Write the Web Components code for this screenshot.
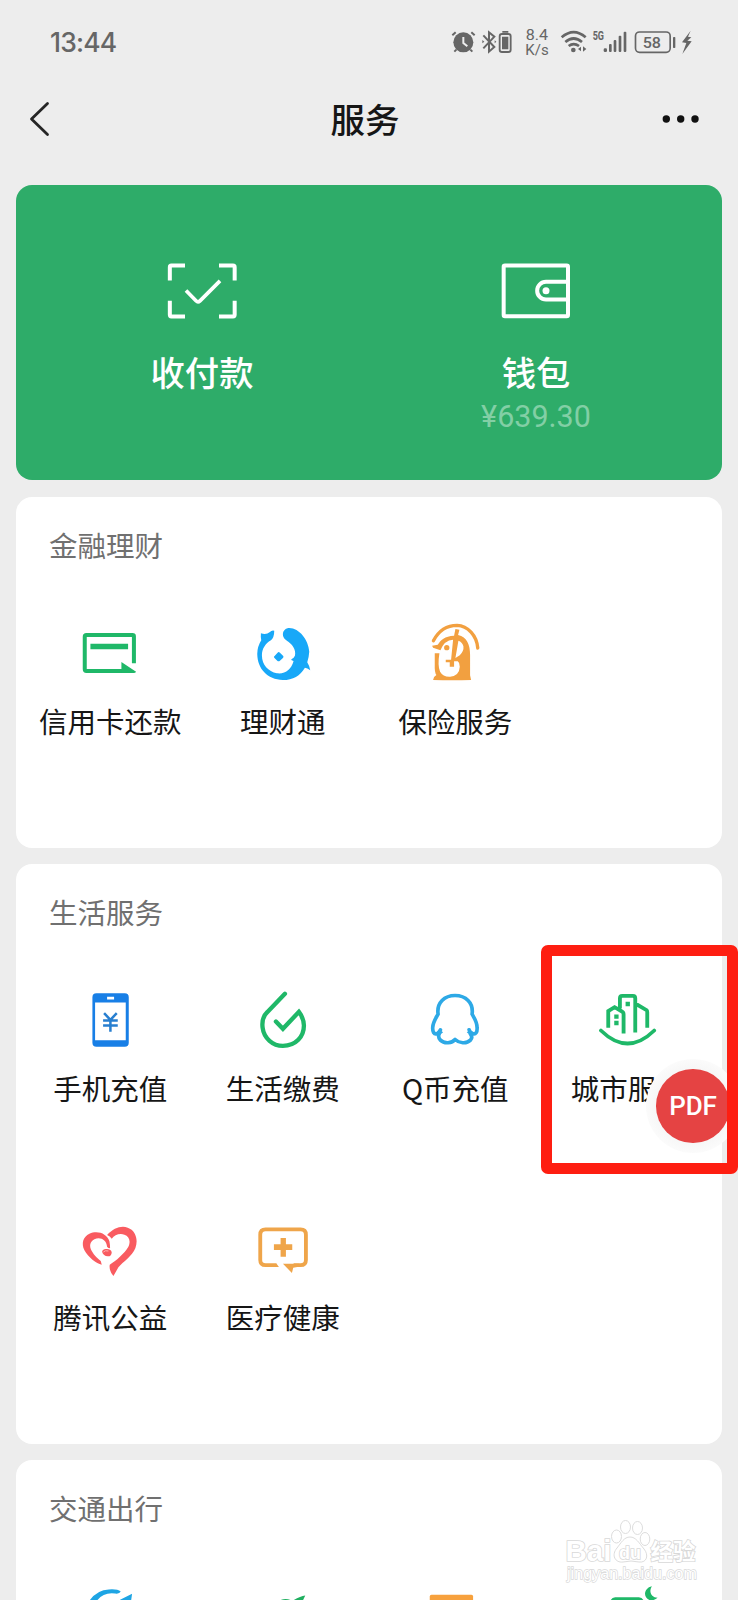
<!DOCTYPE html>
<html lang="zh-CN">
<head>
<meta charset="utf-8">
<title>服务</title>
<style>
html,body{margin:0;padding:0}
body{width:738px;height:1600px;overflow:hidden;background:#ededed;font-family:"Noto Sans CJK SC",sans-serif;color:#161616}
</style>
</head>
<body>
<service-app></service-app>
<script>
const define = (name, markup, setup) => {
  const t = document.createElement('template');
  t.innerHTML = markup;
  customElements.define(name, class extends HTMLElement {
    constructor() {
      super();
      this.attachShadow({ mode: 'open' }).appendChild(t.content.cloneNode(true));
    }
    connectedCallback() { if (setup) setup(this, this.shadowRoot); }
  });
};

const GREEN = '#1fb868', ORANGE = '#f2a040';
const ICONS = {
  scan: ['111 70.5 210 168', `<g fill="none" stroke="#fff" stroke-width="12"><path d="M165 78H124Q119.500 78 119.500 83V123M267 78H309Q314 78 314 83V123M119.500 184V226Q119.500 231 124 231H165M314 184V226Q314 231 309 231H267"/><path d="M168 153L198 184Q204 190 210 184L270 124" stroke-width="11"/></g>`],
  wallet: ['1113 70.5 210 168', `<g fill="none" stroke="#fff" stroke-width="12"><rect x="1121" y="78" width="193" height="152.500" rx="4"/><path d="M1314 127H1248A26.500 26.500 0 0 0 1248 180H1314"/></g><circle cx="1248" cy="154" r="10.500" fill="#fff"/>`],
  credit: ['171.75 60 198 198', `<path d="M342.500 190V109Q342.500 105 338 105H200Q195 105 195 110V208Q195 213 200 213H312" fill="none" stroke="${GREEN}" stroke-width="12"/><path d="M212 131H325V148H212ZM305 186L349 215Q347 219 342 219H305Z" fill="${GREEN}"/>`],
  fish: ['29.25 60 198 198', `<g fill="#18a8f8"><path d="M62 100Q78 106 89 96Q94 90 102 92Q102 112 92 121C75 131 65 147 65 166C65 195 84 215 110 220C136 223 153 208 160 183Q152 182 153 178Q160 176 164 167C169 149 154 130 140 122C120 110 127 84 147 84C177 84 205 120 207 155Q206 171 201 187Q207 196 210 211Q201 204 194 203C180 227 158 240 128 240C81 238 52 207 51 162Q51 140 63 121Q61 109 62 100Z"/><path d="M101 170L112 158Q115 154 119 158L129 168Q131 171 128 174L119 182Q115 185 111 182L102 173Z"/></g>`],
  umbrella: ['546.75 60 198 198', `<path d="M581 122C599 88 626 76 652 76C684 77 711 107 714 144" fill="none" stroke="${ORANGE}" stroke-width="10" stroke-linecap="round"/><path fill="${ORANGE}" fill-rule="evenodd" d="M647 87L659 89L655 105C682 111 691 135 691 164V226L694 240Q638 242 580 240L583 231L590 225Q584 219 585 193V160H599Q593 198 601 215Q610 231 631 230Q659 227 660 200Q661 189 654 184H643V200H630V187H618V179H634L640 119Q614 120 602 151L580 143L577 137L594 134C602 121 615 108 643 107ZM656 122L647 174L660 166Q673 153 671 139Q667 125 656 122Z"/><circle cx="621" cy="143" r="8" fill="${ORANGE}"/>`],
  phone: ['141.75 52.5 198 198', `<path fill="#187fe6" fill-rule="evenodd" d="M200 71H285Q297 71 297 83V220Q297 232 285 232H200Q188 232 188 220V83Q188 71 200 71ZM196 99V212H288V99ZM232 82V90H253V82Z"/><path d="M223 131L242 151L261 131M220 153H264M220 168H264M242 151V187" stroke="#287fd0" stroke-width="7.500" fill="none"/>`],
  drop: ['659.25 52.5 198 198', `<path d="M764 73L711 128C697 141 695 157 697 174C701 207 728 229 758 229C797 229 821 201 821 168Q820 145 806 127L758 178L737 156" fill="none" stroke="${GREEN}" stroke-width="13" stroke-linecap="round"/>`],
  penguin: ['126.75 52.5 198 198', `<path d="M182 181Q178 188 173 192C162 197 158 185 159 173C160 157 170 143 175 134C170 99 195 78 226 78C257 78 282 99 277 134C282 143 292 157 292 174C293 187 288 197 278 192Q270 188 268 181M178 194Q174 204 182 212C194 224 217 221 226 210C238 221 260 224 272 212Q280 204 272 194" fill="none" stroke="#2da9e6" stroke-width="11" stroke-linecap="round" stroke-linejoin="round"/><path d="M180 176Q184 185 190 188L176 200ZM271 176Q267 185 261 188L275 200Z" fill="#2da9e6"/>`],
  city: ['194.25 157.5 198 198', `<g fill="none" stroke="${GREEN}" stroke-width="11.500"><path d="M234 280V230L253 218L275 231Q280 233 280 240V297M269 222V191Q269 184 276 184H308Q315 184 315 191V294M315 207L349 227Q351 229 351 233V280"/><path d="M212 288Q292 366 372 288" stroke-linecap="round" stroke-width="11"/></g><path d="M286 202H299V215H286ZM252 240H265V253H252ZM252 259H265V272H252Z" fill="${GREEN}"/>`],
  heart: ['141.75 48 198 198', `<g fill="#f95b60"><path d="M232 105C252 84 274 76 294 83C318 91 326 119 317 144C307 169 280 185 266 202L251 228Q237 212 240 194C258 184 285 159 295 142C304 124 299 109 284 104C268 99 254 106 246 116Q241 108 232 105Z"/><path d="M216 194C200 192 175 171 164 151C154 130 160 110 179 101C203 90 232 100 239 124Q241 135 241 145Q235 145 232 140C230 119 211 110 194 118C180 125 178 139 186 153C193 167 206 177 213 183Z"/><path d="M217 155Q219 146 231 147Q245 147 246 158Q244 170 234 169Q221 168 217 155Z"/></g><path d="M221 156Q226 150 236 153" fill="none" stroke="#ffb4b4" stroke-width="3"/>`],
  medical: ['659.25 48 198 198', `<path d="M738 195.500H706Q690 195.500 690 180V104Q690 88 706 88H811Q827 88 827 104V180Q827 195.500 811 195.500H790" fill="none" stroke="#efa54a" stroke-width="11.500"/><path d="M738 190L746 201H734ZM758 191H806L801 201L789 203L785 219ZM751 114H767V133H786V150H767V170H751V150H731V133H751Z" fill="#efa54a"/>`],
  travel1: ['231.75 400.5 198 198', `<path d="M264 461Q289 421 327 420Q353 418 363 426Q359 434 346 432Q306 427 287 461ZM361 451L397 433L393 461H357Z" fill="#1ea5e4"/>`],
  travel2: ['749.25 400.5 198 198', `<path d="M843 451Q857 446 872 452V460H843ZM880 452Q900 440 915 438L906 457H878Z" fill="#20af60"/>`],
  travel3: ['246.75 70.5 198 198', `<path d="M270 111Q270 106 275 106H395Q400 106 400 111V230H270Z" fill="#f7a13d"/>`],
  travel4: ['764.25 70.5 198 198', `<path d="M809 130Q812 113 825 113H896Q909 113 912 130V160H809ZM935 80C910 85 906 117 932 123Q944 122 952 115C934 114 924 98 935 80Z" fill="${GREEN}"/>`]
};

define('line-icon', `<style>:host{display:block;width:66px;height:66px}svg{display:block;width:100%;height:100%}</style><svg></svg>`, (el, root) => {
  const [box, body] = ICONS[el.getAttribute('name')];
  const svg = root.querySelector('svg');
  svg.setAttribute('viewBox', box);
  svg.innerHTML = body;
});

const placeIcon = (el, root) => {
  const icon = document.createElement('line-icon');
  icon.setAttribute('name', el.getAttribute('icon'));
  root.querySelector('.icon').replaceChildren(icon);
};

define('status-bar', `<style>
:host{display:flex;justify-content:space-between;align-items:flex-start;height:84px;padding:0 40px 0 50px;box-sizing:border-box;color:#666}
time{font:500 26.500px/36px Inter,sans-serif;margin-top:24px;letter-spacing:-.8px}
svg{display:block;margin-top:26px;width:248px;height:32px}
</style>
<time>13:44</time>
<svg viewBox="60 48 744 96" fill="#666">
<circle cx="100" cy="97" r="30"/><path d="M67 76L77 67M134 76L124 67M79 119L73 125M121 119L127 125" stroke="#666" stroke-width="6" /><path d="M100 81V99L112 109" stroke="#ededed" stroke-width="6" fill="none"/>
<path d="M160 76L193 111L177 125V67L193 80L160 115" fill="none" stroke="#666" stroke-width="6"/><path d="M157 90L163 95L157 100ZM194 91L199 95L194 100Z"/>
<rect x="209" y="72" width="33" height="54" rx="7" fill="none" stroke="#666" stroke-width="5.500"/><path d="M217 63H235V68H217ZM216 80H235V118H216Z"/>
<text x="287" y="91" font-family="Roboto" font-size="45" textLength="67" lengthAdjust="spacingAndGlyphs">8.4</text>
<text x="286" y="134" font-family="Roboto" font-size="45" textLength="70" lengthAdjust="spacingAndGlyphs">K/s</text>
<g fill="none" stroke="#666" stroke-width="8"><path d="M395 82Q431 51 467 82M406 96Q431 75 456 96M416 108Q431 97 447 108"/></g><circle cx="430" cy="120" r="7"/><path d="M453 110V124L444 117ZM459 109V125L469 117Z"/>
<text x="488" y="91" font-family="Roboto" font-weight="700" font-size="36" textLength="34" lengthAdjust="spacingAndGlyphs">5G</text>
<rect x="521" y="115" width="10" height="11" rx="4"/><rect x="537" y="102" width="8" height="24" rx="3"/><rect x="551" y="90" width="8" height="36" rx="3"/><rect x="566" y="77" width="8" height="49" rx="3"/><rect x="581" y="65" width="8" height="61" rx="3"/>
<rect x="616.500" y="66" width="104" height="61" rx="12" fill="none" stroke="#666" stroke-width="5"/><rect x="729" y="81" width="7" height="33" rx="2"/>
<text x="638" y="113" font-family="Roboto" font-weight="500" font-size="46" textLength="55" lengthAdjust="spacingAndGlyphs">58</text>
<path d="M782 62L756 97L769 99L757 132L785 94L772 92L784 82L774 80Z"/>
</svg>`);

define('nav-bar', `<style>
:host{display:grid;grid-template-columns:60px 1fr 68px;align-items:center;height:70px;box-sizing:border-box}
.back{width:24px;height:38px;margin-left:28px}
h1{margin:-2px 0 0;font-size:34.500px;line-height:50px;font-weight:500;text-align:center}
.more{width:40px;height:10px;justify-self:start;margin-left:-9px}
svg{display:block}
</style>
<svg class="back" viewBox="28 100 24 38"><path d="M47.500 103.500L31.500 119L47.500 134.500" fill="none" stroke="#252525" stroke-width="2.800" stroke-linecap="round" stroke-linejoin="round"/></svg>
<h1><slot></slot></h1>
<svg class="more" viewBox="661 114 40 10" fill="#111"><circle cx="666.300" cy="119" r="3.700"/><circle cx="680.700" cy="119" r="3.700"/><circle cx="695" cy="119" r="3.700"/></svg>`);

define('pay-card', `<style>
:host{display:grid;grid-template-columns:1fr 1fr;height:295.500px;margin-top:30.500px;padding:78.500px 19px 0;box-sizing:border-box;border-radius:16px;background:#2eac69}
</style><slot></slot>`);

define('pay-entry', `<style>
:host{display:flex;flex-direction:column;align-items:center;color:#fff}
line-icon{width:70px;height:56px}
.name{margin-top:29px;font-size:34.300px;line-height:46px;font-weight:500}
.sum{font:400 30.500px/36px Roboto,sans-serif;margin-top:5px;color:#82cfa5}
</style><div class="icon"></div><div class="name"><slot></slot></div><div class="sum"><slot name="sum"></slot></div>`, placeIcon);

define('service-section', `<style>
:host{display:block;margin-top:16.500px;padding:26px 8px 0;box-sizing:border-box;border-radius:16px;background:#fff}
h2{margin:0 0 53.500px;padding-left:25px;font-size:28.500px;line-height:43px;font-weight:400;color:#707070}
.grid{display:grid;grid-template-columns:repeat(4,1fr);grid-auto-rows:228.500px}
</style><h2></h2><div class="grid"><slot></slot></div>`,
(el, root) => { root.querySelector('h2').textContent = el.getAttribute('heading'); });

define('service-item', `<style>
:host{display:flex;flex-direction:column;align-items:center;padding-top:.5px;box-sizing:border-box;white-space:nowrap}
:host([clipped]) .label{padding-right:1em}
.label{margin-top:15px;font-size:28.500px;line-height:40px}
</style><div class="icon"></div><div class="label"><slot></slot></div>`, placeIcon);

define('pdf-button', `<style>
:host{position:absolute;left:646px;top:1059px;width:94px;height:94px;border-radius:50%;background:radial-gradient(closest-side,#f7f7f7 80%,#fbfbfb 100%);display:grid;place-items:center}
span{width:73.500px;height:73.500px;border-radius:50%;background:#e54343;color:#fff;font:500 26px/74px Roboto,sans-serif;text-align:center;letter-spacing:-.2px}
</style><span><slot></slot></span>`);

define('focus-frame', `<style>:host{position:absolute;left:541px;top:945px;width:197px;height:228.500px;box-sizing:border-box;border:11.500px solid #fe1e11;border-radius:7px}</style>`);

define('site-watermark', `<style>:host{position:absolute;left:560px;top:1515px;width:145px;height:74px}svg{display:block}text{font-family:"Liberation Sans","Noto Sans CJK SC",sans-serif;paint-order:stroke}</style>
<svg width="145" height="74" viewBox="560 1515 145 74" fill="#fff" stroke="#d8d8d8" stroke-width="1.600">
<text x="565.500" y="1561" font-size="29" font-weight="700" textLength="46" lengthAdjust="spacingAndGlyphs">Bai</text>
<g stroke-width=".9"><ellipse cx="616.500" cy="1536.500" rx="5" ry="6.500"/><ellipse cx="625.500" cy="1527" rx="5" ry="6.500"/><ellipse cx="637.500" cy="1528" rx="5" ry="6.500"/><ellipse cx="645" cy="1539" rx="4.800" ry="6.500"/>
<path d="M630 1537C624 1537 621 1543 617 1548C611 1555 615 1563 623 1562Q631 1560 639 1562C647 1563 649 1555 644 1549C639 1543 636 1537 630 1537Z"/></g>
<text x="619" y="1559" font-size="19" font-weight="700" textLength="22" lengthAdjust="spacingAndGlyphs">du</text>
<text x="650.500" y="1560" font-size="22.500" font-weight="700" textLength="45">经验</text>
<text x="567" y="1579" font-size="16" stroke-width="1.300" textLength="130" lengthAdjust="spacingAndGlyphs">jingyan.baidu.com</text>
</svg>`);

define('service-app', `<style>
:host{display:block;position:relative;width:738px;height:1600px;overflow:hidden}
main{padding:0 16px}
.one{height:351px}.two{height:579.500px}.three{height:351px}
</style>
<status-bar></status-bar>
<nav-bar>服务</nav-bar>
<main>
<pay-card><pay-entry icon="scan">收付款</pay-entry><pay-entry icon="wallet">钱包<span slot="sum">¥639.30</span></pay-entry></pay-card>
<service-section class="one" heading="金融理财">
<service-item icon="credit">信用卡还款</service-item><service-item icon="fish">理财通</service-item><service-item icon="umbrella">保险服务</service-item>
</service-section>
<service-section class="two" heading="生活服务">
<service-item icon="phone">手机充值</service-item><service-item icon="drop">生活缴费</service-item><service-item icon="penguin">Q币充值</service-item><service-item icon="city" clipped>城市服</service-item><service-item icon="heart">腾讯公益</service-item><service-item icon="medical">医疗健康</service-item>
</service-section>
<service-section class="three" heading="交通出行">
<service-item icon="travel1"></service-item><service-item icon="travel2"></service-item><service-item icon="travel3"></service-item><service-item icon="travel4"></service-item>
</service-section>
</main>
<pdf-button>PDF</pdf-button>
<focus-frame></focus-frame>
<site-watermark></site-watermark>`);
</script>
</body>
</html>
